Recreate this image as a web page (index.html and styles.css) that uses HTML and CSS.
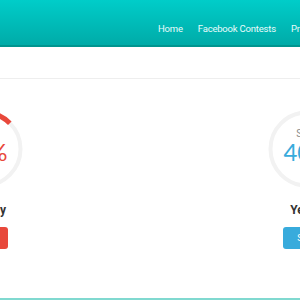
FILE: index.html
```html
<!DOCTYPE html>
<html lang="en">
<head>
  <meta charset="UTF-8">
  <meta name="viewport" content="width=device-width, initial-scale=1.0">
  <title>Pricing</title>
  <link rel="stylesheet" href="styles.css">
</head>
<body>
  <header class="topbar">
    <nav class="nav">
      <a href="#">Home</a>
      <a href="#">Facebook Contests</a>
      <a href="#">Pricing</a>
    </nav>
  </header>
  <div class="subbar"></div>
  <main class="plans">
    <div class="plan plan-monthly">
      <div class="dial">
        <svg class="dial-ring" width="78" height="78" viewBox="0 0 78 78">
          <circle cx="39" cy="39" r="36.5" fill="none" stroke="#f2f2f2" stroke-width="4"/>
          <path d="M39 2.5 A36.5 36.5 0 0 1 64.8 13.2" fill="none" stroke="#e8483b" stroke-width="5"/>
        </svg>
        <div class="dial-text">
          <span class="dial-label">Save</span>
          <span class="dial-value">25%</span>
        </div>
      </div>
      <div class="plan-name">Monthly</div>
      <a class="btn" href="#">Start</a>
    </div>
    <div class="plan plan-yearly">
      <div class="dial">
        <svg class="dial-ring" width="78" height="78" viewBox="0 0 78 78">
          <circle cx="39" cy="39" r="36.5" fill="none" stroke="#f2f2f2" stroke-width="4"/>
          <path d="M39 2.5 A36.5 36.5 0 0 1 75.5 39" fill="none" stroke="#38abdc" stroke-width="5"/>
        </svg>
        <div class="dial-text">
          <span class="dial-label">Save</span>
          <span class="dial-value">40%</span>
        </div>
      </div>
      <div class="plan-name">Yearly</div>
      <a class="btn" href="#">Start</a>
    </div>
  </main>
  <div class="footer-line"></div>
</body>
</html>
```

FILE: styles.css
```css
body {
  margin: 0;
  width: 300px;
  height: 300px;
  overflow: hidden;
  background: #fff;
  font-family: Roboto, "Open Sans", sans-serif;
}
.topbar {
  height: 45px;
  background: linear-gradient(#00cdc9, #00aba8);
  border-bottom: 2px solid #00958f;
  overflow: hidden;
}
.nav {
  display: flex;
  gap: 15px;
  padding: 22px 0 0 158px;
  white-space: nowrap;
}
.nav a {
  flex-shrink: 0;
  color: #eafcfb;
  text-decoration: none;
  font-size: 9.5px;
  line-height: 14px;
  letter-spacing: -0.2px;
}
.subbar {
  height: 31px;
  border-bottom: 1px solid #eeeeee;
}
.plans {
  display: flex;
  justify-content: space-between;
  align-items: flex-start;
  margin: 0 -47px 0 -56px;
  padding-top: 31px;
  height: 188px;
}
.plan {
  flex: none;
  width: 80px;
  display: flex;
  flex-direction: column;
  align-items: center;
}
.dial {
  flex: none;
  display: grid;
  width: 78px;
  height: 78px;
}
.dial-ring {
  display: block;
}
.dial-ring,
.dial-text {
  grid-area: 1 / 1;
}
.dial-text {
  display: flex;
  flex-direction: column;
  align-items: center;
  justify-content: center;
  padding-bottom: 6px;
}
.dial-label {
  font-size: 10px;
  line-height: 12px;
  color: #8a8a8a;
}
.dial-value {
  font-family: Lato, "Open Sans", sans-serif;
  font-size: 24px;
  line-height: 24px;
}
.plan-monthly .dial-value { color: #e8483b; }
.plan-yearly .dial-value { color: #38abdc; }
.plan-name {
  flex: none;
  margin-top: 14px;
  font-size: 12px;
  line-height: 16px;
  font-weight: 700;
  color: #333;
}
.btn {
  flex: none;
  margin-top: 9px;
  width: 48px;
  height: 22px;
  line-height: 22px;
  border-radius: 3px;
  text-align: center;
  color: #fff;
  font-size: 9px;
  text-decoration: none;
}
.plan-monthly .btn { background: #e8483b; }
.plan-yearly .btn { background: #38abdc; }
.footer-line {
  border-top: 2px solid #80d9d0;
}
```
